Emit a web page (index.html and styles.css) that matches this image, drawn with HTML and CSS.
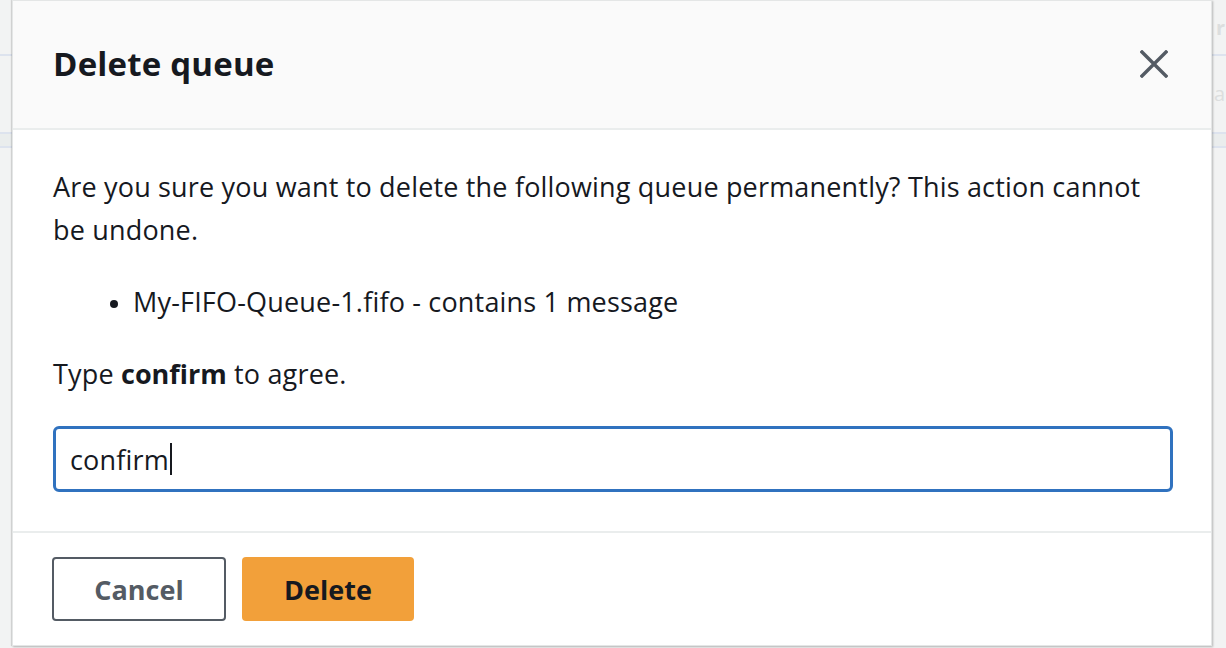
FILE: index.html
```html
<!DOCTYPE html>
<html lang="en">
<head>
<meta charset="utf-8">
<title>Delete queue</title>
<link rel="stylesheet" href="styles.css">
</head>
<body>
<div class="backdrop">
  <div class="bg-row bg-row-1"><span class="bg-text">r</span></div>
  <div class="bg-row bg-row-2"><span class="bg-text">a</span></div>
  <div class="bg-row bg-row-3"></div>
</div>
<div class="modal" role="dialog" aria-labelledby="modal-title">
  <div class="modal-header">
    <h2 id="modal-title" class="modal-title">Delete queue</h2>
    <button class="close-btn" aria-label="Close">
      <svg width="28" height="28" viewBox="0 0 28 28" aria-hidden="true">
        <path d="M2 2 L26 26 M26 2 L2 26" stroke="#545b64" stroke-width="3.4" stroke-linecap="square" fill="none"/>
      </svg>
    </button>
  </div>
  <div class="modal-body">
    <p class="intro">Are you sure you want to delete the following queue permanently? This action cannot be undone.</p>
    <ul class="queue-list">
      <li>My-FIFO-Queue-1.fifo - contains 1 message</li>
    </ul>
    <p class="type-hint">Type <strong>confirm</strong> to agree.</p>
    <div class="input-box"><span class="input-text">confirm</span><span class="caret"></span></div>
  </div>
  <div class="modal-footer">
    <button class="btn btn-cancel">Cancel</button>
    <button class="btn btn-delete">Delete</button>
  </div>
</div>
</body>
</html>
```
FILE: styles.css
```css
* { box-sizing: border-box; }
html, body {
  margin: 0;
  padding: 0;
  width: 1226px;
  height: 648px;
  overflow: hidden;
  background: #f2f3f3;
  font-family: "Open Sans", "Noto Sans", sans-serif;
  color: #16191f;
}
.backdrop {
  display: flex;
  flex-direction: column;
}
.bg-row {
  display: flex;
  justify-content: flex-end;
  align-items: flex-start;
  border-bottom: 2px solid #dde3ee;
}
.bg-row-1 { height: 56px; }
.bg-row-2 { height: 78px; }
.bg-row-3 { height: 14px; background: #eaeded; border-bottom: 2px solid #dde3ee; }
.bg-text {
  font-size: 20px;
  line-height: 24px;
  color: #dcdede;
  margin-right: 1px;
  margin-top: 16px;
  font-weight: 700;
}
.bg-row-2 .bg-text { font-weight: 400; margin-top: 26px; }

.modal {
  position: absolute;
  left: 12px;
  top: 0;
  width: 1200px;
  height: 646px;
  background: #ffffff;
  border: 1px solid #e4e6e6;
  box-shadow: 1px 1px 2px rgba(0,0,0,0.25), -1px 0 1px rgba(0,0,0,0.12);
  display: flex;
  flex-direction: column;
}
.modal > * { flex-shrink: 0; }
.modal-header {
  height: 129px;
  background: #fafafa;
  border-bottom: 2px solid #eaeded;
  display: flex;
  align-items: center;
  justify-content: space-between;
  padding: 0 43px 0 40px;
}
.modal-title {
  margin: 0;
  font-size: 33px;
  font-weight: 700;
  letter-spacing: 0.2px;
  color: #16191f;
  padding-bottom: 2px;
}
.close-btn {
  border: 0;
  background: transparent;
  padding: 0;
  width: 28px;
  height: 28px;
  display: flex;
  margin-bottom: 1px;
}
.modal-body {
  padding: 35px 38px 0 40px;
  font-size: 27px;
  letter-spacing: 0.18px;
  line-height: 43px;
  display: flex;
  flex-direction: column;
}
.modal-body > * { flex-shrink: 0; }
.intro { margin: 0; }
.queue-list {
  margin: 29px 0 0 0;
  padding-left: 80px;
}
.queue-list li::marker { font-size: 22px; }
.type-hint { margin: 29px 0 0 0; }
.type-hint strong { font-weight: 700; letter-spacing: 0; }
.input-box {
  margin-top: 31px;
  height: 66px;
  border: 3px solid #3072bf;
  border-radius: 6px;
  display: flex;
  align-items: center;
  padding-left: 14px;
  color: #16191f;
}
.input-text { line-height: 43px; }
.caret {
  width: 2px;
  height: 32px;
  background: #16191f;
  margin-left: 1px;
}
.modal-footer {
  margin-top: 39px;
  border-top: 2px solid #eaeded;
  padding: 24px 0 0 39px;
  display: flex;
  gap: 16px;
}
.btn {
  height: 64px;
  flex-shrink: 0;
  border-radius: 4px;
  font-family: "Open Sans", "Noto Sans", sans-serif;
  font-size: 27px;
  font-weight: 700;
  display: flex;
  align-items: center;
  justify-content: center;
  padding: 0;
}
.btn-cancel {
  width: 174px;
  background: #ffffff;
  border: 2px solid #545b64;
  color: #545b64;
}
.btn-delete {
  width: 172px;
  background: #f2a03a;
  border: 0;
  color: #16191f;
}
```
